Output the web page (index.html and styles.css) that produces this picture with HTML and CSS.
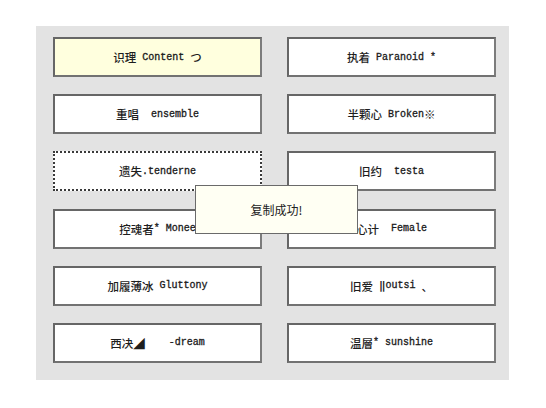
FILE: index.html
```html
<!DOCTYPE html>
<html>
<head>
<meta charset="utf-8">
<link rel="stylesheet" href="styles.css">
</head>
<body>
<div class="panel">
  <div class="grid">
    <div class="btn active"><span class="zh">识理</span><span class="en"> Content </span><span class="zh">つ</span></div>
    <div class="btn"><span class="zh">执着</span><span class="en"> Paranoid *</span></div>
    <div class="btn"><span class="zh">重唱</span><span class="en">  ensemble</span></div>
    <div class="btn"><span class="zh">半颗心</span><span class="en"> Broken</span><span class="zh">※</span></div>
    <div class="btn focus"><span class="zh">遗失</span><span class="en">.tenderne</span></div>
    <div class="btn"><span class="zh">旧约</span><span class="en">  testa</span></div>
    <div class="btn"><span class="zh">控魂者</span><span class="en">* Monee</span></div>
    <div class="btn"><span class="zh">心计</span><span class="en">  Female</span></div>
    <div class="btn"><span class="zh">加履薄冰</span><span class="en"> Gluttony</span></div>
    <div class="btn"><span class="zh">旧爱</span><span class="en"> </span><span class="bar">‖</span><span class="en">outsi </span><span class="zh">、</span></div>
    <div class="btn"><span class="zh">西决◢</span><span class="en">    -dream</span></div>
    <div class="btn"><span class="zh">温層</span><span class="en">* sunshine</span></div>
  </div>
  <div class="toast">复制成功!</div>
</div>
</body>
</html>
```
FILE: styles.css
```css
html, body {
  margin: 0;
  padding: 0;
  background: #ffffff;
}
body {
  width: 546px;
  height: 408px;
  position: relative;
}
.panel {
  position: absolute;
  left: 36px;
  top: 26px;
  width: 473px;
  height: 354px;
  box-sizing: border-box;
  background: #e3e3e3;
  padding: 11px 13px 0 17px;
}
.grid {
  display: grid;
  grid-template-columns: 209px 209px;
  grid-auto-rows: 40px;
  column-gap: 25px;
  row-gap: 17.2px;
}
.btn {
  box-sizing: border-box;
  background: #ffffff;
  border: 2px solid #666666;
  border-right-color: #7c7c7c;
  border-bottom-color: #727272;
  display: flex;
  align-items: center;
  justify-content: center;
  white-space: pre;
  color: #1e1e1e;
}
.btn.active {
  background: #ffffde;
}
.btn.focus {
  border: 2px dotted #3a3a3a;
}
.zh {
  font-family: "Noto Sans CJK SC", sans-serif;
  font-size: 11.5px;
  font-weight: 500;
}
.en {
  font-family: "Liberation Mono", monospace;
  font-size: 10px;
  color: #1a1a1a;
  -webkit-text-stroke: 0.3px #1a1a1a;
}
.bar {
  font-family: "DejaVu Sans Mono", monospace;
  font-size: 11px;
  font-weight: bold;
  color: #1a1a1a;
}
.toast {
  position: absolute;
  left: 159px;
  top: 159px;
  width: 163px;
  height: 49px;
  box-sizing: border-box;
  background: #fffff3;
  border: 1px solid #6a6a6a;
  display: flex;
  align-items: center;
  justify-content: center;
  font-family: "Noto Sans CJK SC", sans-serif;
  font-size: 12px;
  color: #222;
}
```
